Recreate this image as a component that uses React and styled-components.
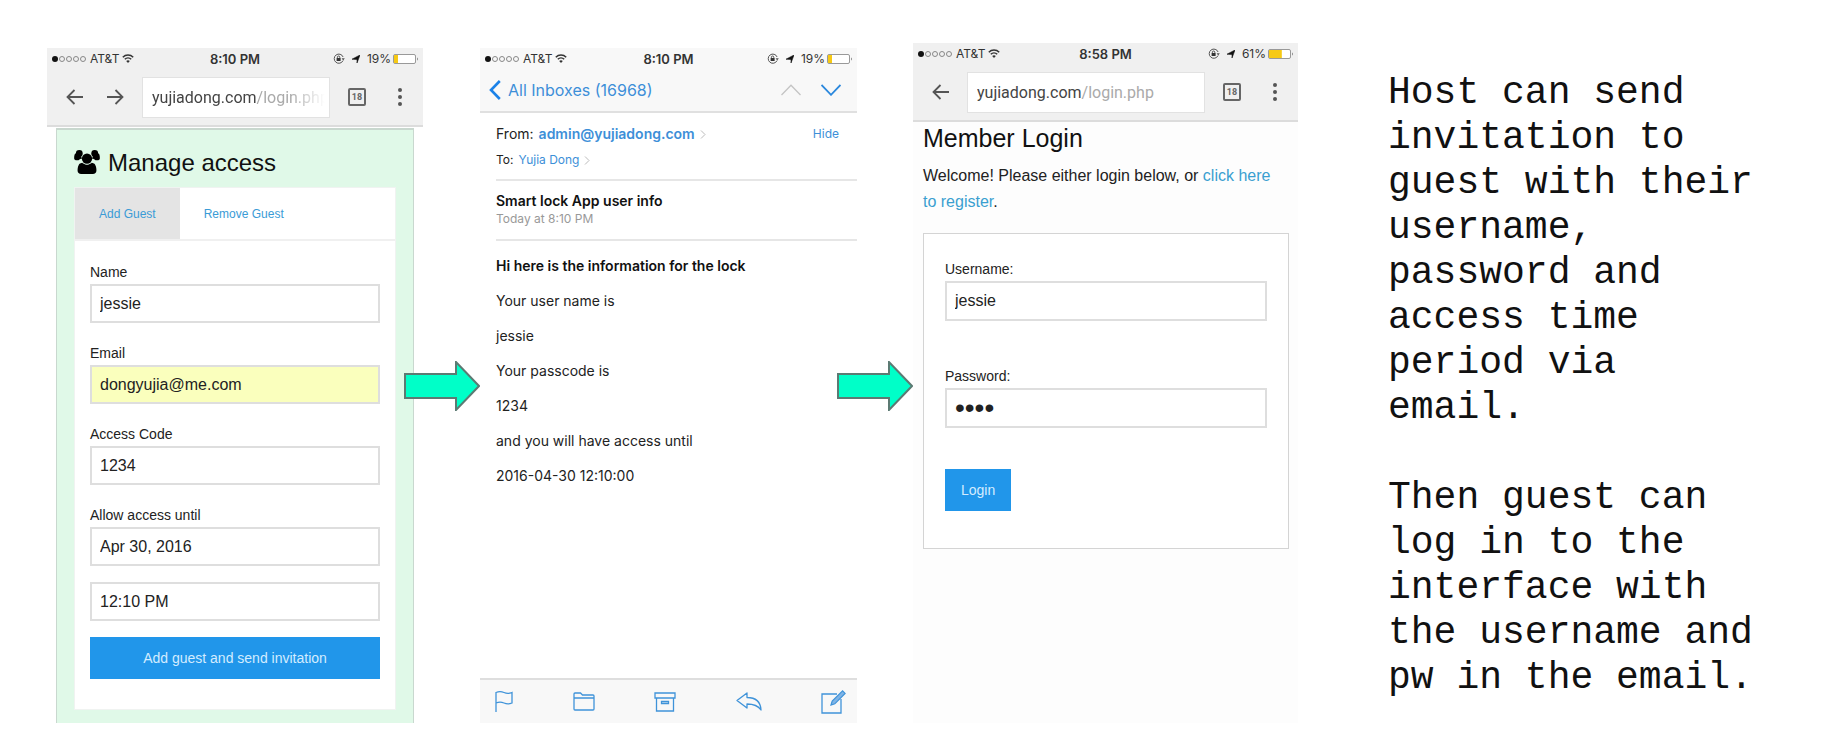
import React from "react";
import styled, { createGlobalStyle, css } from "styled-components";

const GlobalStyle = createGlobalStyle`
  *, *::before, *::after { box-sizing: border-box; }
  body {
    margin: 0;
    background: #fff;
    color: #222;
    font-family: "Liberation Sans", Arial, sans-serif;
  }
  h1, h2, p { margin: 0; font-weight: 400; }
  button, input { font: inherit; color: inherit; }
  svg { display: block; flex: none; }
`;

/* ---------- slide layout ---------- */

const Slide = styled.main`
  display: grid;
  grid-template-columns:
    minmax(0, 376fr) 57px minmax(0, 377fr) 56px minmax(0, 385fr)
    minmax(0, 460fr);
  padding: 43px 76px 31px 47px;
`;

const Phone = styled.section`
  display: flex;
  flex-direction: column;
  margin-top: ${(p) => p.$top || 0}px;
  background: ${(p) => p.$bg || "#fff"};
`;

const ArrowSlot = styled.div`
  display: flex;
  justify-content: flex-end;
  align-items: center;
  z-index: 1;
  padding-top: 6px;
`;

const Notes = styled.aside`
  display: flex;
  flex-direction: column;
  gap: 45px;
  padding: 27px 0 0 90px;
  color: #111;
  font-family: "Liberation Mono", monospace;
  font-size: 38px;
  line-height: 45px;
`;

/* ---------- status bar ---------- */

const StatusRow = styled.div`
  display: grid;
  grid-template-columns: 1fr auto 1fr;
  align-items: center;
  height: 21px;
  padding: 0 4px;
  background: ${(p) => p.$bg};
  color: #333;
  font-family: Inter, sans-serif;
  font-size: 12px;
`;

const StatusGroup = styled.div`
  display: flex;
  align-items: center;
  gap: ${(p) => p.$gap}px;
  ${(p) => p.$end && css`justify-content: flex-end;`}
`;

const Clock = styled.time`
  font-weight: 600;
  font-size: 13px;
`;

const Charge = styled.span`
  display: flex;
  align-items: center;
  gap: 2px;
`;

/* ---------- browser bar ---------- */

const BrowserBar = styled.div`
  display: flex;
  align-items: center;
  gap: 18px;
  height: 58px;
  padding: 0 21px 0 19px;
  background: #f0f0f0;
  border-bottom: 2px solid #dcdcdc;
`;

const BarGroup = styled.div`
  display: flex;
  align-items: center;
  flex: none;
  gap: ${(p) => p.$gap}px;
`;

const IconButton = styled.button`
  display: flex;
  align-items: center;
  justify-content: center;
  flex: none;
  padding: 0;
  border: 0;
  background: none;
  color: ${(p) => p.$color || "#555"};
  cursor: pointer;
`;

const Address = styled.button`
  flex: 1;
  min-width: 0;
  height: 41px;
  padding: 0 4px 0 9px;
  border: 1px solid #e2e2e2;
  background: #fff;
  color: #444;
  font-family: Roboto, sans-serif;
  font-size: 16px;
  text-align: left;
`;

const AddressText = styled.span`
  display: block;
  overflow: hidden;
  white-space: nowrap;
  ${(p) => p.$fade && css`
    mask-image: linear-gradient(to right, #000 80%, transparent);
  `}
`;

const Path = styled.span`
  color: #aaa;
`;

const TabCount = styled.button`
  flex: none;
  width: 18px;
  height: 18px;
  padding: 0;
  border: 2px solid #666;
  border-radius: 2px;
  background: none;
  color: #666;
  font-family: Roboto, sans-serif;
  font-size: 9px;
  font-weight: 700;
  line-height: 14px;
`;

/* ---------- forms ---------- */

const Field = styled.div`
  display: flex;
  flex-direction: column;
  font-size: 14px;
  line-height: 23px;
`;

const TextInput = styled.input`
  width: 100%;
  height: ${(p) => p.$height || 39}px;
  padding: 0 8px;
  border: 2px solid #dedede;
  border-radius: 0;
  background: ${(p) => (p.$filled ? "#faffbd" : "#fff")};
  font-size: 16px;
  outline: 0;

  &[type="password"] { font-size: 28px; }
`;

const PrimaryButton = styled.button`
  height: 42px;
  padding: 0 16px;
  border: 0;
  background: #2196ea;
  color: #d3ecff;
  font-size: 14px;
  cursor: pointer;
`;

/* ---------- manage access ---------- */

const AccessPanel = styled.div`
  flex: 1;
  margin: 1px 9px 0;
  padding: 14px 17px 13px;
  border: 1px solid #c9d8cf;
  border-width: 2px 1px 0;
  background: #e0f9e8;
`;

const AccessTitle = styled.h1`
  display: flex;
  align-items: flex-start;
  gap: 8px;
  height: 43px;
  padding-top: 6px;
  color: #111;
  font-size: 24px;
  line-height: 26px;
`;

const Card = styled.div`
  border: 1px solid #f0f3f1;
  background: #fff;
`;

const Tabs = styled.div`
  display: flex;
  height: 53px;
  border-bottom: 2px solid #f0f0f0;
`;

const Tab = styled.button`
  padding: 0 24px;
  border: 0;
  background: ${(p) => (p.$active ? "#e4e4e4" : "none")};
  color: #3a9bd6;
  font-size: 12px;
  cursor: pointer;
`;

const GuestForm = styled.form`
  display: flex;
  flex-direction: column;
  gap: 16px;
  padding: 20px 15px 30px;
`;

const FieldStack = styled.div`
  display: flex;
  flex-direction: column;
  gap: 19px;
`;

/* ---------- mail ---------- */

const MailNav = styled.header`
  display: flex;
  align-items: center;
  justify-content: space-between;
  height: 44px;
  padding: 0 16px 0 9px;
  border-bottom: 2px solid #e0e0e0;
  background: #f8f8f8;
`;

const BackButton = styled(IconButton)`
  gap: 7px;
  font-family: Inter, sans-serif;
  font-size: 16px;
`;

const NavPair = styled.div`
  display: flex;
  gap: 20px;
`;

const MailBody = styled.div`
  flex: 1;
  padding-left: 16px;
  font-family: Inter, sans-serif;
  font-size: 14px;
  line-height: 20px;
`;

const MailBlock = styled.div`
  height: ${(p) => p.$height}px;
  padding-top: ${(p) => p.$pad}px;
  border-bottom: 2px solid #e6e6e6;
`;

const MailRow = styled.div`
  display: flex;
  align-items: center;
  gap: 5px;
  height: 26px;
  padding-right: 18px;
  font-size: ${(p) => p.$size}px;
`;

const MailLink = styled.a`
  display: flex;
  align-items: center;
  gap: 5px;
  color: #3d8fd8;
  font-weight: ${(p) => (p.$bold ? 600 : 400)};
  text-decoration: none;
  ${(p) => p.$end && css`
    margin-left: auto;
    font-size: 12px;
  `}
`;

const Subject = styled.h2`
  color: #111;
  font-size: 14px;
  font-weight: 600;
  line-height: 20px;
`;

const Sent = styled.p`
  color: #999;
  font-size: 12px;
  line-height: 16px;
`;

const Message = styled.div`
  display: flex;
  flex-direction: column;
  gap: 15px;
  padding-top: 15px;
`;

const Lead = styled.p`
  color: #111;
  font-weight: 600;
`;

const MailTools = styled.footer`
  display: flex;
  align-items: center;
  justify-content: space-between;
  height: 45px;
  padding: 0 11px 0 15px;
  border-top: 2px solid #dedede;
  background: #f8f8f8;
`;

/* ---------- login ---------- */

const LoginPage = styled.div`
  flex: 1;
  padding: 2px 9px 0 10px;
`;

const LoginTitle = styled.h1`
  color: #111;
  font-size: 25px;
  line-height: 28px;
`;

const Welcome = styled.p`
  padding: 11px 6px 18px 0;
  font-size: 16px;
  line-height: 26px;

  a { color: #3a9fd0; text-decoration: none; }
`;

const LoginForm = styled.form`
  display: flex;
  flex-direction: column;
  align-items: stretch;
  padding: 24px 21px 37px;
  border: 1px solid #d4d4d4;
  background: #fff;
`;

const LoginFields = styled.div`
  display: flex;
  flex-direction: column;
  gap: 44px;
  margin-bottom: 41px;
`;

const LoginButton = styled(PrimaryButton)`
  align-self: flex-start;
`;

/* ---------- icons ---------- */

const Svg = ({ w, h, children, ...rest }) => (
  <svg width={w} height={h} viewBox={`0 0 ${w} ${h}`} fill="none" aria-hidden="true" {...rest}>
    {children}
  </svg>
);

const Signal = () => (
  <Svg w={36} h={8}>
    <circle cx="4" cy="4" r="3" fill="#111" />
    {[11, 18, 25, 32].map((x) => (
      <circle key={x} cx={x} cy="4" r="2.5" stroke="#888" />
    ))}
  </Svg>
);

const Wifi = () => (
  <Svg w={12} h={9}>
    <path d="M0.8 3.2a7.4 7.4 0 0 1 10.4 0M2.8 5.3a4.6 4.6 0 0 1 6.4 0" stroke="#333" strokeWidth="1.5" />
    <path d="M6 9L4.2 7a2.6 2.6 0 0 1 3.6 0z" fill="#333" />
  </Svg>
);

const OrientationLock = () => (
  <Svg w={12} h={11}>
    <path d="M10 7.6A4.6 4.6 0 1 1 10.1 4" stroke="#555" />
    <path d="M8.6 5.2h3.2L10.2 7.4z" fill="#555" />
    <rect x="3.6" y="5" width="4" height="3" fill="#333" />
    <path d="M4.4 5V4.2a1.2 1.2 0 0 1 2.4 0V5" stroke="#333" strokeWidth="0.8" />
  </Svg>
);

const Location = () => (
  <Svg w={8} h={8}>
    <path d="M8 0L5 8V4.4L0 4.2z" fill="#111" stroke="#111" strokeWidth="0.6" />
  </Svg>
);

const Battery = ({ level }) => (
  <Svg w={26} h={10}>
    <rect x="0.5" y="0.5" width="22" height="9" rx="1.5" stroke="#999" fill="#fff" />
    <rect x="1" y="1" width={(21 * level) / 100} height="8" fill="#f6c915" />
    <path d="M24 3.2q1.6 1.8 0 3.6z" fill="#555" />
  </Svg>
);

const ArrowLeft = () => (
  <Svg w={17} h={16}>
    <path d="M17 8H1.5M8.5 1L1.5 8l7 7" stroke="currentColor" strokeWidth="1.8" />
  </Svg>
);

const ArrowRight = () => (
  <Svg w={17} h={16}>
    <path d="M0 8h15.5M8.5 1l7 7-7 7" stroke="currentColor" strokeWidth="1.8" />
  </Svg>
);

const More = () => (
  <Svg w={4} h={18}>
    {[2, 9, 16].map((y) => (
      <circle key={y} cx="2" cy={y} r="2" fill="currentColor" />
    ))}
  </Svg>
);

const Users = () => (
  <svg width="26" height="24" viewBox="0 0 1920 1792" fill="#000" aria-hidden="true">
    <path d="M593 640q-162 5-265 128h-134q-82 0-138-40.5t-56-118.500q0-353 124-353 6 0 43.500 21t97.500 42.500 119 21.500q67 0 133-23-5 37-5 66 0 139 81 256zM1664 1533q0 120-73 189.500t-194 69.500h-874q-121 0-194-69.500t-73-189.500q0-53 3.500-103.500t14-109 26.500-108.500 43-97.500 62-81 85.500-53.500 111.500-20q10 0 43 21.500t73 48 107 48 135 21.500 135-21.500 107-48 73-48 43-21.500q61 0 111.500 20t85.500 53.500 62 81 43 97.500 26.500 108.500 14 109 3.500 103.500z" />
    <path d="M1920 609q0 78-56 118.500t-138 40.500h-134q-103-123-265-128 81-117 81-256 0-29-5-66 66 23 133 23 59 0 119-21.500t97.500-42.500 43.500-21q124 0 124 353z" />
    <circle cx="384" cy="256" r="256" />
    <circle cx="1536" cy="256" r="256" />
    <circle cx="960" cy="640" r="384" />
  </svg>
);

const BackChevron = () => (
  <Svg w={12} h={20}>
    <path d="M10.8 1L2 10l8.800 9" stroke="#1b82e8" strokeWidth="2.6" />
  </Svg>
);

const WideChevron = ({ up }) => (
  <Svg w={20} h={12}>
    <path d={up ? "M0.5 11L10 1.2 19.5 11" : "M0.5 1L10 10.8 19.5 1"} stroke={up ? "#c4c4c4" : "#2b88dd"} strokeWidth={up ? 1.3 : 1.8} />
  </Svg>
);

const SmallChevron = () => (
  <Svg w={6} h={9}>
    <path d="M1 0.5l4 4-4 4" stroke="#bbb" />
  </Svg>
);

const toolIcons = {
  Flag: (
    <Svg w={18} h={21}>
      <path d="M1 21V1.500q4-1.600 8 0t8 0V12q-4 1.600-8 0t-8 0" stroke="currentColor" strokeWidth="1.3" />
    </Svg>
  ),
  Move: (
    <Svg w={22} h={19}>
      <path d="M1 17V2q0-1 1-1h5.500l2 2H20q1 0 1 1v13q0 1-1 1H2q-1 0-1-1zM1 6h20" stroke="currentColor" strokeWidth="1.3" />
    </Svg>
  ),
  Archive: (
    <Svg w={22} h={20}>
      <path d="M1 1h20v5H1zM2.500 6v13h17V6M7.500 9.500h7v2h-7z" stroke="currentColor" strokeWidth="1.3" />
    </Svg>
  ),
  Reply: (
    <Svg w={26} h={19}>
      <path d="M1 8.500L11 1v4.500c8 0 13.500 4 14 12.500-3-4.500-7-6-14-6V16z" stroke="currentColor" strokeWidth="1.3" strokeLinejoin="round" />
    </Svg>
  ),
  Compose: (
    <Svg w={25} h={24}>
      <path d="M16 4H1v19h19V9" stroke="currentColor" strokeWidth="1.3" />
      <path d="M10 15l1.200-4L21.600 0.900l2.500 2.500L13.800 13.800z" stroke="currentColor" strokeWidth="1.2" fill="#7fb4e6" />
    </Svg>
  ),
};

const FlowArrow = () => (
  <Svg w={76} h={50}>
    <path d="M1 13h51V1l23 24-23 24V37H1z" fill="#00ffc8" stroke="#5c7a73" strokeWidth="2" />
  </Svg>
);

/* ---------- parts ---------- */

const StatusBar = ({ time, level, bg }) => (
  <StatusRow $bg={bg}>
    <StatusGroup $gap={3}>
      <Signal />
      <span>AT&amp;T</span>
      <Wifi />
    </StatusGroup>
    <Clock>{time}</Clock>
    <StatusGroup $gap={7} $end>
      <OrientationLock />
      <Location />
      <Charge>
        {level}%
        <Battery level={level} />
      </Charge>
    </StatusGroup>
  </StatusRow>
);

const Browser = ({ forward }) => (
  <BrowserBar>
    <BarGroup $gap={24}>
      <IconButton type="button" aria-label="Back"><ArrowLeft /></IconButton>
      {forward && <IconButton type="button" aria-label="Forward"><ArrowRight /></IconButton>}
    </BarGroup>
    <Address type="button">
      <AddressText $fade={forward}>
        yujiadong.com<Path>/login.php</Path>
      </AddressText>
    </Address>
    <BarGroup $gap={32}>
      <TabCount type="button">18</TabCount>
      <IconButton type="button" aria-label="Menu"><More /></IconButton>
    </BarGroup>
  </BrowserBar>
);

const LabeledInput = ({ id, label, ...rest }) => (
  <Field>
    <label htmlFor={id}>{label}</label>
    <TextInput id={id} {...rest} />
  </Field>
);

const mailLines = [
  "Your user name is",
  "jessie",
  "Your passcode is",
  "1234",
  "and you will have access until",
  "2016-04-30 12:10:00",
];

export default function App() {
  return (
    <>
      <GlobalStyle />
      <Slide>
        <Phone $top={5}>
          <StatusBar time="8:10 PM" level={19} bg="#f0f0f0" />
          <Browser forward />
          <AccessPanel>
            <AccessTitle><Users />Manage access</AccessTitle>
            <Card>
              <Tabs>
                <Tab type="button" $active>Add Guest</Tab>
                <Tab type="button">Remove Guest</Tab>
              </Tabs>
              <GuestForm onSubmit={(e) => e.preventDefault()}>
                <FieldStack>
                  <LabeledInput id="guest-name" label="Name" defaultValue="jessie" />
                  <LabeledInput id="guest-email" label="Email" type="email" $filled defaultValue="dongyujia@me.com" />
                  <LabeledInput id="guest-code" label="Access Code" defaultValue="1234" />
                  <LabeledInput id="guest-until" label="Allow access until" defaultValue="Apr 30, 2016" />
                </FieldStack>
                <TextInput aria-label="Time" defaultValue="12:10 PM" />
                <PrimaryButton type="submit">Add guest and send invitation</PrimaryButton>
              </GuestForm>
            </Card>
          </AccessPanel>
        </Phone>

        <ArrowSlot><FlowArrow /></ArrowSlot>

        <Phone $top={5}>
          <StatusBar time="8:10 PM" level={19} bg="#f8f8f8" />
          <MailNav>
            <BackButton type="button" $color="#3d8fd8">
              <BackChevron />
              All Inboxes (16968)
            </BackButton>
            <NavPair>
              <IconButton type="button" aria-label="Previous"><WideChevron up /></IconButton>
              <IconButton type="button" aria-label="Next"><WideChevron /></IconButton>
            </NavPair>
          </MailNav>
          <MailBody>
            <MailBlock $height={68} $pad={8}>
              <MailRow $size={14}>
                From:
                <MailLink href="#sender" $bold>admin@yujiadong.com <SmallChevron /></MailLink>
                <MailLink href="#hide" $end>Hide</MailLink>
              </MailRow>
              <MailRow $size={12}>
                To:
                <MailLink href="#recipient">Yujia Dong <SmallChevron /></MailLink>
              </MailRow>
            </MailBlock>
            <MailBlock $height={60} $pad={10}>
              <Subject>Smart lock App user info</Subject>
              <Sent>Today at 8:10 PM</Sent>
            </MailBlock>
            <Message>
              <Lead>Hi here is the information for the lock</Lead>
              {mailLines.map((line) => <p key={line}>{line}</p>)}
            </Message>
          </MailBody>
          <MailTools>
            {Object.entries(toolIcons).map(([name, icon]) => (
              <IconButton key={name} type="button" aria-label={name} $color="#3f93d9">{icon}</IconButton>
            ))}
          </MailTools>
        </Phone>

        <ArrowSlot><FlowArrow /></ArrowSlot>

        <Phone $bg="#fdfdfd">
          <StatusBar time="8:58 PM" level={61} bg="#f0f0f0" />
          <Browser />
          <LoginPage>
            <LoginTitle>Member Login</LoginTitle>
            <Welcome>
              Welcome! Please either login below, or <a href="#register">click here to register</a>.
            </Welcome>
            <LoginForm onSubmit={(e) => e.preventDefault()}>
              <LoginFields>
                <LabeledInput id="login-name" label="Username:" $height={40} defaultValue="jessie" />
                <LabeledInput id="login-password" label="Password:" type="password" $height={40} defaultValue="1234" />
              </LoginFields>
              <LoginButton type="submit">Login</LoginButton>
            </LoginForm>
          </LoginPage>
        </Phone>

        <Notes>
          <p>Host can send invitation to guest with their username, password and access time period via email.</p>
          <p>Then guest can log in to the interface with the username and pw in the email.</p>
        </Notes>
      </Slide>
    </>
  );
}
